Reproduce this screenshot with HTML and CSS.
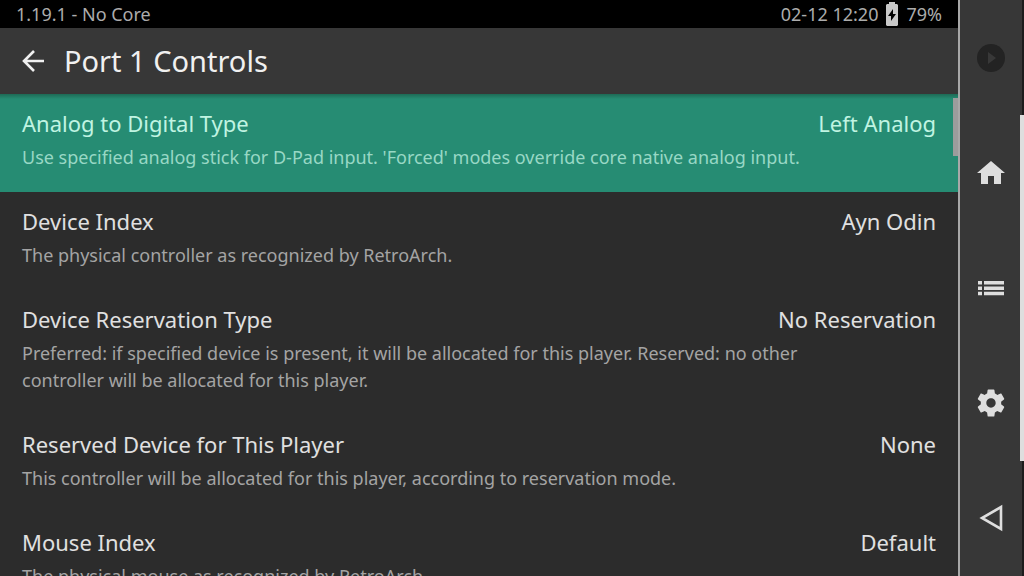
FILE: index.html
```html
<!DOCTYPE html>
<html lang="en">
<head>
    <meta charset="UTF-8">
    <meta name="viewport" content="width=device-width, initial-scale=1.0">
    <title>Port 1 Controls</title>
    <link rel="stylesheet" href="styles.css">
</head>
<body>

    <main class="screen">
        <div class="status">
            <span>1.19.1 - No Core</span>
            <span class="status-right">
                <span>02-12 12:20</span>
                <svg class="battery" viewBox="0 0 12 24" aria-hidden="true">
                    <path fill="#c8c8c8" d="M3 0h6v2h2l1 1v20l-1 1H1l-1-1V3l1-1h2z"/>
                    <path fill="#000" d="M7 7L2 14h3v5l5-7H7z"/>
                </svg>
                <span>79%</span>
            </span>
        </div>

        <header class="header">
            <button class="back" aria-label="Back">
                <svg width="22" height="22" viewBox="0 0 22 22" fill="none" stroke="#f0f0f0" stroke-width="2.6">
                    <path d="M22 11H2M12 1L2 11l10 10"/>
                </svg>
            </button>
            <h1>Port 1 Controls</h1>
        </header>

        <div class="list">
            <button class="row selected">
                <span class="line"><span>Analog to Digital Type</span><span>Left Analog</span></span>
                <span class="desc">Use specified analog stick for D-Pad input. 'Forced' modes override core native analog input.</span>
            </button>
            <button class="row">
                <span class="line"><span>Device Index</span><span>Ayn Odin</span></span>
                <span class="desc">The physical controller as recognized by RetroArch.</span>
            </button>
            <button class="row">
                <span class="line"><span>Device Reservation Type</span><span>No Reservation</span></span>
                <span class="desc">Preferred: if specified device is present, it will be allocated for this player. Reserved: no other controller will be allocated for this player.</span>
            </button>
            <button class="row">
                <span class="line"><span>Reserved Device for This Player</span><span>None</span></span>
                <span class="desc">This controller will be allocated for this player, according to reservation mode.</span>
            </button>
            <button class="row">
                <span class="line"><span>Mouse Index</span><span>Default</span></span>
                <span class="desc">The physical mouse as recognized by RetroArch.</span>
            </button>
            <div class="thumb"></div>
        </div>
    </main>

    <nav class="rail">
        <button aria-label="Play" disabled>
            <svg width="28" height="28" viewBox="0 0 28 28">
                <circle cx="14" cy="14" r="14" fill="#232323"/>
                <path fill="#383838" d="M11 8l8 6-8 6z"/>
            </svg>
        </button>
        <button aria-label="Home">
            <svg width="28" height="28" viewBox="0 0 28 28">
                <path fill="#dedede" d="M14 2L0 14h4v11h7v-8h6v8h7V14h4z"/>
            </svg>
        </button>
        <button aria-label="Menu">
            <svg width="28" height="28" viewBox="0 0 28 28">
                <path fill="#dedede" d="M1 7h4v3.5H1zM7 7h20v3.5H7zM1 12.4h4v3.5H1zM7 12.4h20v3.5H7zM1 17.8h4v3.5H1zM7 17.8h20v3.5H7z"/>
            </svg>
        </button>
        <button aria-label="Settings">
            <svg width="34" height="34" viewBox="0 0 24 24">
                <path fill="#dedede" d="M19.14 12.94c.04-.3.06-.61.06-.94 0-.32-.02-.64-.07-.94l2.03-1.58c.18-.14.23-.41.12-.61l-1.92-3.32c-.12-.22-.37-.29-.59-.22l-2.39.96c-.5-.38-1.03-.7-1.62-.94l-.36-2.54c-.04-.24-.24-.41-.48-.41h-3.84c-.24 0-.43.17-.47.41l-.36 2.54c-.59.24-1.13.57-1.62.94l-2.39-.96c-.22-.08-.47 0-.59.22L2.74 8.87c-.12.21-.08.47.12.61l2.03 1.58c-.05.3-.09.63-.09.94s.02.64.07.94l-2.03 1.58c-.18.14-.23.41-.12.61l1.92 3.32c.12.22.37.29.59.22l2.39-.96c.5.38 1.03.7 1.62.94l.36 2.54c.05.24.24.41.48.41h3.84c.24 0 .44-.17.47-.41l.36-2.54c.59-.24 1.13-.56 1.62-.94l2.39.96c.22.08.47 0 .59-.22l1.92-3.32c.12-.22.07-.47-.12-.61l-2.01-1.58zM12 15.3c-1.82 0-3.3-1.48-3.3-3.3s1.48-3.3 3.3-3.3 3.3 1.48 3.3 3.3-1.48 3.3-3.3 3.3z"/>
            </svg>
        </button>
        <button aria-label="Previous">
            <svg width="28" height="28" viewBox="0 0 28 28">
                <path fill="none" stroke="#dedede" stroke-width="2.6" d="M24 3v22L5 14z"/>
            </svg>
        </button>
    </nav>

    <div class="page-scroll"><div class="page-thumb"></div></div>

</body>
</html>
```
FILE: styles.css
```css
* {
    box-sizing: border-box;
}
body {
    margin: 0;
    height: 100vh;
    display: flex;
    overflow: hidden;
    position: relative;
    background: #2c2c2c;
    color: #e0e0e0;
    font-family: "Noto Sans", sans-serif;
}
button {
    border: none;
    padding: 0;
    background: none;
    color: inherit;
    font: inherit;
    cursor: pointer;
}
svg {
    display: block;
}
.screen {
    flex: 1;
    min-width: 0;
    display: flex;
    flex-direction: column;
}
.status {
    flex: none;
    height: 28px;
    padding: 0 16px;
    display: flex;
    align-items: center;
    justify-content: space-between;
    background: #000;
    color: #acacac;
    font-size: 18px;
    line-height: 28px;
}
.status-right {
    display: flex;
    align-items: center;
    gap: 8px;
}
.battery {
    width: 12px;
    height: 24px;
}
.header {
    flex: none;
    height: 66px;
    padding: 0 22px;
    display: flex;
    align-items: center;
    gap: 20px;
    background: #373737;
    color: #f0f0f0;
}
.header h1 {
    margin: 0;
    font-size: 29px;
    font-weight: 400;
    line-height: 36px;
}
.list {
    flex: 1;
    min-height: 0;
    overflow: hidden;
    position: relative;
}
.row {
    display: block;
    width: 100%;
    padding: 13px 22px 21px;
    text-align: left;
}
.line {
    display: flex;
    justify-content: space-between;
    font-size: 22px;
    line-height: 32px;
    margin-bottom: 5px;
}
.desc {
    display: block;
    max-width: 850px;
    color: #a4a4a4;
    font-size: 18px;
    line-height: 27px;
}
.selected {
    background: linear-gradient(#1e6a55, #268c73 5px);
    color: #c0f4e2;
}
.selected .desc {
    color: #98d8c5;
}
.thumb {
    position: absolute;
    top: 4px;
    right: 0;
    width: 5px;
    height: 58px;
    background: #9c9c9c;
}
.rail {
    flex: none;
    width: 66px;
    display: grid;
    grid-template-rows: repeat(5, 1fr);
    background: #373737;
    border-left: 2px solid #a8a8a8;
    border-right: 2px solid #1c1c1c;
}
.rail button {
    display: flex;
    align-items: center;
    justify-content: center;
}
.page-scroll {
    position: absolute;
    top: 0;
    right: 0;
    width: 4px;
    height: 100%;
    padding-top: 115px;
}
.page-thumb {
    height: 75%;
    background: #dedede;
}
```
